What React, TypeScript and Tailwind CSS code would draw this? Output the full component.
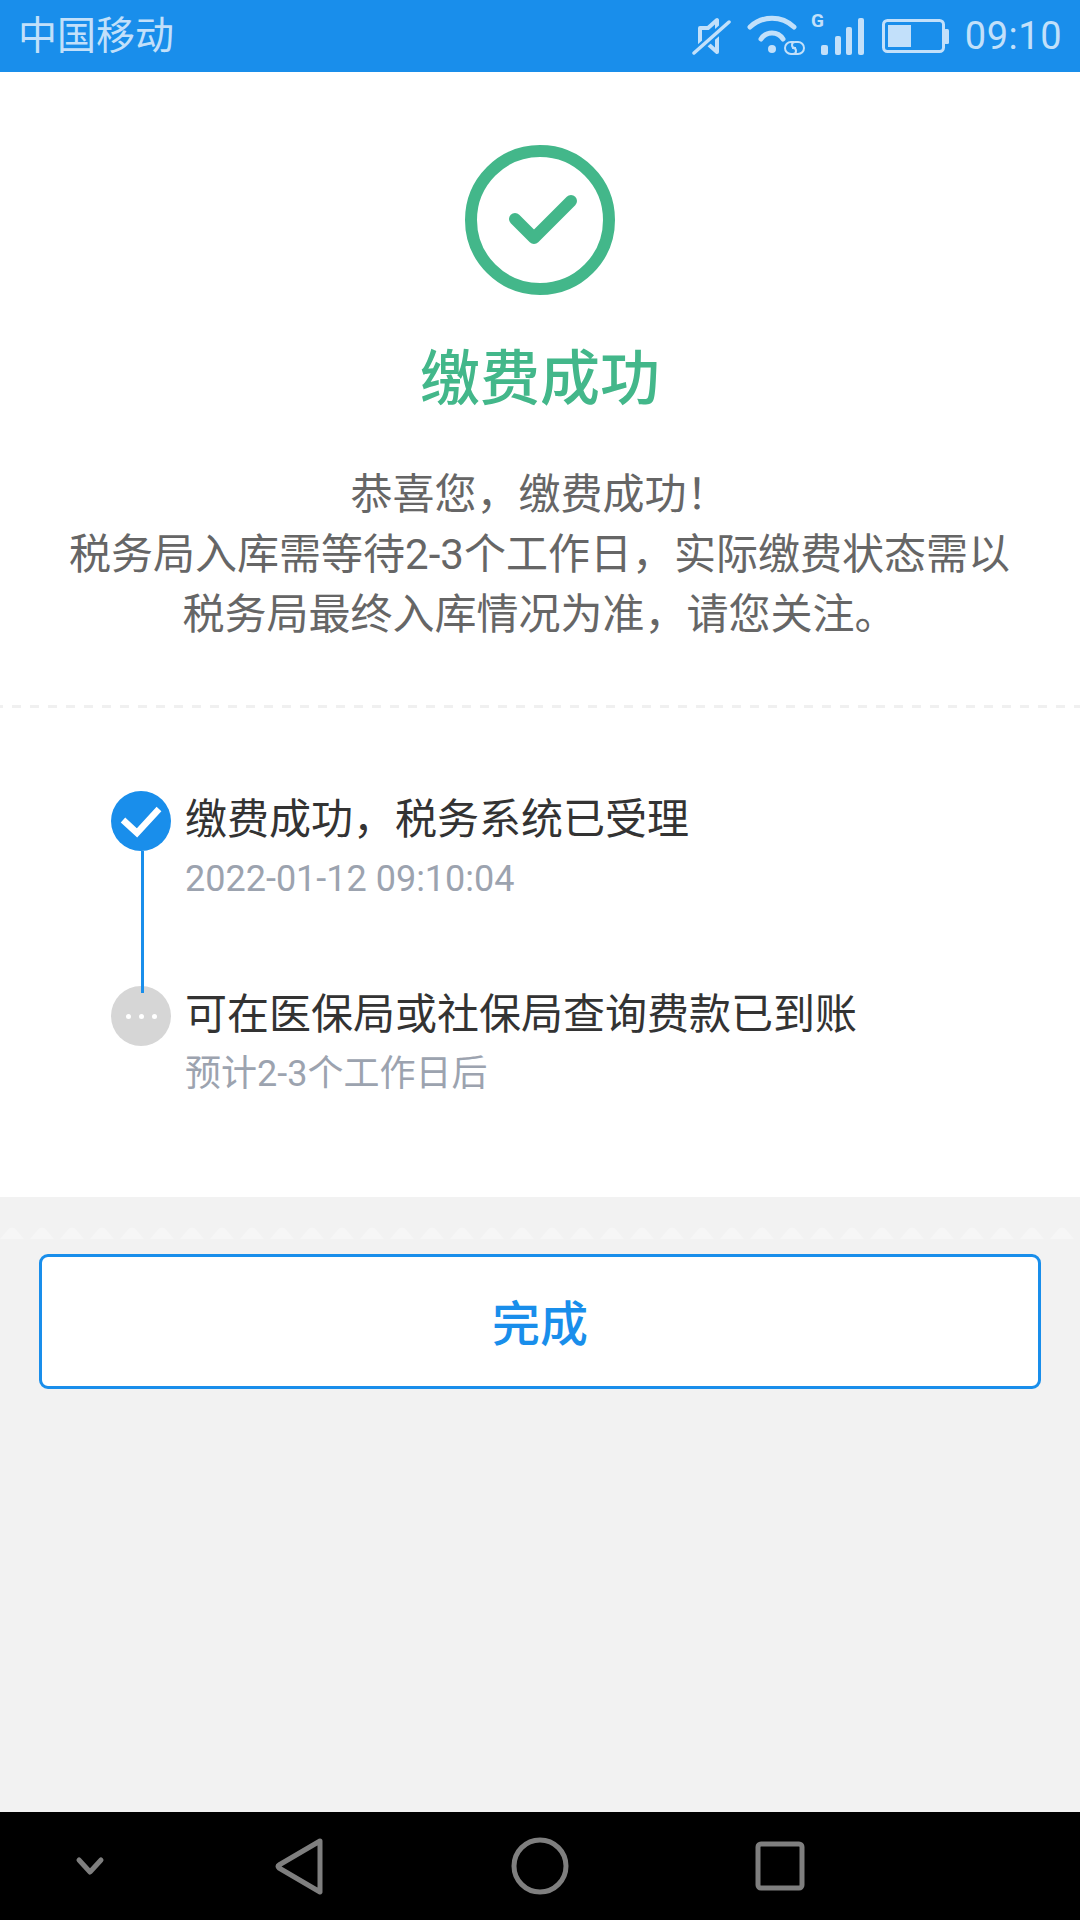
export default function App() {
  return (
    <div className="w-[1080px] h-[1920px] flex flex-col bg-[#f2f2f2] overflow-hidden font-['Roboto','Noto_Sans_CJK_SC',sans-serif]">
      <div className="h-[72px] shrink-0 bg-[#198eeb] flex items-center text-[#c2e0fa] pl-[18px] pr-[18px]">
        <span className="text-[39px] leading-none">中国移动</span>
        <div className="ml-auto flex items-center">
          <svg width="40" height="40" viewBox="0 0 40 40" fill="none" className="mr-[15px]">
            <path d="M8 12h8L25 4v32L16 28H8z" stroke="#c2e0fa" strokeWidth="4" strokeLinejoin="round" />
            <path d="M2 37L37 6" stroke="#198eeb" strokeWidth="8" />
            <path d="M2 37L37 6" stroke="#c2e0fa" strokeWidth="3.5" strokeLinecap="round" />
          </svg>
          <svg width="58" height="44" viewBox="0 0 58 44" fill="none" className="mr-[6px]">
            <path d="M3 13A32 32 0 0 1 47 13" stroke="#c2e0fa" strokeWidth="5" strokeLinecap="round" />
            <path d="M14 25A13 13 0 0 1 36 25" stroke="#c2e0fa" strokeWidth="5" strokeLinecap="round" />
            <circle cx="25" cy="35" r="4" fill="#c2e0fa" />
            <path d="M47 28h-3a6 6 0 0 0 0 12h2a3 3 0 0 0 0-6h-1M47 40h4a6 6 0 0 0 0-12h-3a3 3 0 0 0 0 6h1" stroke="#c2e0fa" strokeWidth="2" />
          </svg>
          <svg width="54" height="60" viewBox="0 0 54 60" className="mr-[17px]">
            <text x="0" y="21" fontSize="19" fontWeight="700" fill="#c2e0fa" fontFamily="Roboto">G</text>
            <rect x="10" y="39" width="7" height="10" rx="2" fill="#c2e0fa" />
            <rect x="24" y="30" width="6" height="19" rx="2" fill="#c2e0fa" />
            <rect x="35" y="21" width="6" height="28" rx="2" fill="#c2e0fa" />
            <rect x="47" y="12" width="6" height="37" rx="2" fill="#c2e0fa" />
          </svg>
          <svg width="68" height="34" viewBox="0 0 68 34" className="mr-[15px]">
            <rect x="1.5" y="1.5" width="60" height="31" rx="4" fill="none" stroke="#c2e0fa" strokeWidth="3" />
            <rect x="6" y="6" width="23" height="22" fill="#c2e0fa" />
            <rect x="62" y="10" width="5" height="15" rx="1.5" fill="#c2e0fa" />
          </svg>
          <span className="text-[38px] leading-none tracking-[0.5px]">09:10</span>
        </div>
      </div>

      <div className="h-[1125px] shrink-0 bg-white flex flex-col">
        <div className="flex flex-col items-center pt-[73px]">
          <svg width="150" height="150" viewBox="0 0 150 150" fill="none">
            <circle cx="75" cy="75" r="69" stroke="#43b78a" strokeWidth="12" />
            <path d="M50 74L69 93L106 56" stroke="#43b78a" strokeWidth="12" strokeLinecap="round" strokeLinejoin="round" />
          </svg>
          <h1 className="mt-[50px] text-[60px] leading-[70px] font-medium text-[#43b78a]">缴费成功</h1>
          <div className="mt-[50px] -ml-[1px] text-[42px] leading-[60px] text-[#666666] text-center">
            <p>恭喜您，缴费成功！</p>
            <p>税务局入库需等待2-3个工作日，实际缴费状态需以</p>
            <p>税务局最终入库情况为准，请您关注。</p>
          </div>
        </div>
        <div className="mt-[60px] h-[3px] w-full bg-[repeating-linear-gradient(90deg,#f0f0f0_0,#f0f0f0_3px,transparent_3px,transparent_12px,#f0f0f0_12px,#f0f0f0_18px)]" />

        <div className="pl-[111px] pt-[83px]">
          <div className="flex h-[195px]">
            <div className="relative w-[60px] h-[60px] shrink-0 rounded-full bg-[#198eeb] flex items-center justify-center">
              <svg width="42" height="34" viewBox="0 0 42 34" fill="none">
                <path d="M3 16L17 29L39 5" stroke="#fff" strokeWidth="6.5" />
              </svg>
              <div className="absolute left-[30px] top-[60px] w-[3px] h-[142px] bg-[#198eeb] z-10" />
            </div>
            <div className="ml-[14px] pt-[1px]">
              <div className="text-[42px] leading-[56px] text-[#333333]">缴费成功，税务系统已受理</div>
              <div className="mt-[7px] text-[36px] leading-[48px] text-[#9ca3af]">2022-01-12 09:10:04</div>
            </div>
          </div>
          <div className="flex">
            <div className="w-[60px] h-[60px] shrink-0 rounded-full bg-[#d6d6d6] flex items-center justify-center gap-[8px]">
              <span className="w-[5px] h-[5px] rounded-full bg-white" />
              <span className="w-[5px] h-[5px] rounded-full bg-white" />
              <span className="w-[5px] h-[5px] rounded-full bg-white" />
            </div>
            <div className="ml-[14px] pt-[1px]">
              <div className="text-[42px] leading-[56px] text-[#333333]">可在医保局或社保局查询费款已到账</div>
              <div className="mt-[7px] text-[36px] leading-[48px] text-[#9ca3af]">预计2-3个工作日后</div>
            </div>
          </div>
        </div>
      </div>

      <div className="flex-1 flex flex-col">
        <div className="mt-[30px] -ml-[3px] flex h-[12px]">
          {Array.from({ length: 37 }).map((_, i) => (
            <div key={i} className="w-[30px] h-[12px] shrink-0 flex justify-center">
              <svg width="24" height="12" viewBox="0 0 24 12">
                <path d="M0 12L9 1.5Q12 -0.5 15 1.5L24 12Z" fill="#f6f6f6" />
              </svg>
            </div>
          ))}
        </div>
        <button className="mt-[15px] mx-[39px] h-[135px] pt-[6px] border-[3px] border-[#198eeb] rounded-[9px] bg-white text-[48px] font-medium text-[#198eeb]">
          完成
        </button>
      </div>

      <div className="h-[108px] shrink-0 bg-black flex items-center">
        <svg width="1080" height="108" viewBox="0 0 1080 108" fill="none">
          <path d="M79 48L90 60L101 48" stroke="#7f7f7f" strokeWidth="5" strokeLinecap="round" strokeLinejoin="round" />
          <path d="M320 29L279 53Q277 54 279 56L320 80Z" stroke="#7f7f7f" strokeWidth="5" strokeLinejoin="round" />
          <circle cx="540" cy="54" r="26" stroke="#7f7f7f" strokeWidth="5" />
          <rect x="758" y="32" width="44" height="44" rx="3" stroke="#7f7f7f" strokeWidth="5" />
        </svg>
      </div>
    </div>
  );
}
